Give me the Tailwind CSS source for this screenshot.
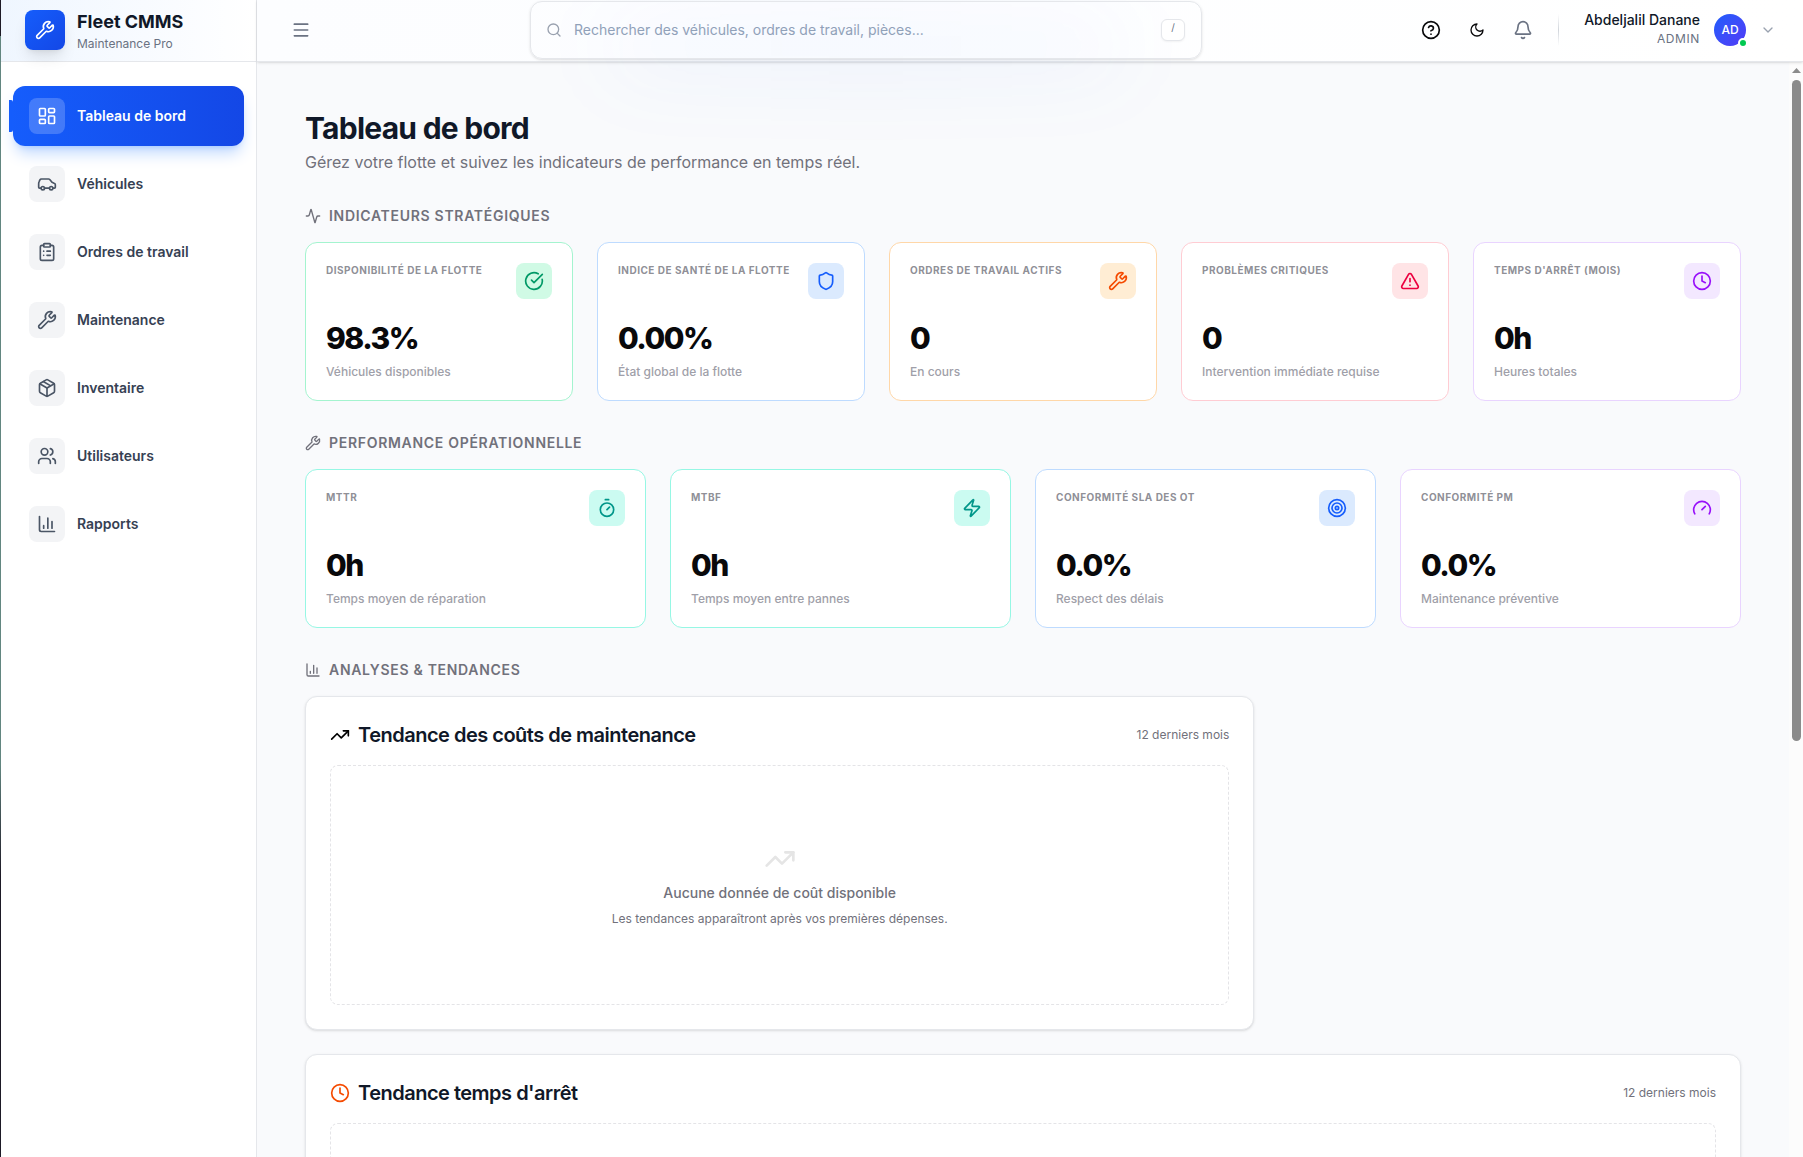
<!DOCTYPE html>
<html lang="fr">

<head>
    <meta charset="UTF-8">
    <meta name="viewport" content="width=device-width, initial-scale=1.0">
    <title>Fleet CMMS - Tableau de bord</title>
    <script src="https://cdn.jsdelivr.net/npm/@tailwindcss/browser@4"></script>
</head>

<body class="flex h-screen overflow-hidden bg-white font-['Inter',sans-serif] text-zinc-950">

    <!-- icon sprite -->
    <svg class="hidden" xmlns="http://www.w3.org/2000/svg">
        <symbol id="wrench" viewBox="0 0 24 24"><path d="M14.7 6.3a1 1 0 0 0 0 1.4l1.6 1.6a1 1 0 0 0 1.4 0l3.106-3.105c.32-.322.863-.22.983.218a6 6 0 0 1-8.259 7.057l-7.91 7.91a1 1 0 0 1-2.999-3l7.91-7.91a6 6 0 0 1 7.057-8.259c.438.12.54.662.219.984z"/></symbol>
        <symbol id="dashboard" viewBox="0 0 24 24"><rect width="7" height="9" x="3" y="3" rx="1"/><rect width="7" height="5" x="14" y="3" rx="1"/><rect width="7" height="9" x="14" y="12" rx="1"/><rect width="7" height="5" x="3" y="16" rx="1"/></symbol>
        <symbol id="car" viewBox="0 0 24 24"><path d="M19 17h2c.6 0 1-.4 1-1v-3c0-.9-.7-1.7-1.5-1.9L18 10l-2.7-3.4A2 2 0 0 0 13.700 6H5.300a2 2 0 0 0-1.800 1.100l-.8 1.700A6 6 0 0 0 2 12v4c0 .6.4 1 1 1h2"/><circle cx="7" cy="17" r="2"/><path d="M9 17h6"/><circle cx="17" cy="17" r="2"/></symbol>
        <symbol id="clipboard" viewBox="0 0 24 24"><rect width="8" height="4" x="8" y="2" rx="1" ry="1"/><path d="M16 4h2a2 2 0 0 1 2 2v14a2 2 0 0 1-2 2H6a2 2 0 0 1-2-2V6a2 2 0 0 1 2-2h2M12 11h4M12 16h4M8 11h.01M8 16h.01"/></symbol>
        <symbol id="package" viewBox="0 0 24 24"><path d="M11 21.730a2 2 0 0 0 2 0l7-4A2 2 0 0 0 21 16V8a2 2 0 0 0-1-1.730l-7-4a2 2 0 0 0-2 0l-7 4A2 2 0 0 0 3 8v8a2 2 0 0 0 1 1.730zM12 22V12"/><path d="M3.290 7 12 12l8.710-5M7.500 4.270l9 5.150"/></symbol>
        <symbol id="users" viewBox="0 0 24 24"><path d="M16 21v-2a4 4 0 0 0-4-4H6a4 4 0 0 0-4 4v2M16 3.128a4 4 0 0 1 0 7.744M22 21v-2a4 4 0 0 0-3-3.870"/><circle cx="9" cy="7" r="4"/></symbol>
        <symbol id="chart" viewBox="0 0 24 24"><path d="M3 3v16a2 2 0 0 0 2 2h16M18 17V9M13 17V5M8 17v-3"/></symbol>
        <symbol id="menu" viewBox="0 0 24 24"><path d="M4 5h16M4 12h16M4 19h16"/></symbol>
        <symbol id="search" viewBox="0 0 24 24"><path d="m21 21-4.340-4.340"/><circle cx="11" cy="11" r="8"/></symbol>
        <symbol id="help" viewBox="0 0 24 24"><circle cx="12" cy="12" r="10"/><path d="M9.090 9a3 3 0 0 1 5.830 1c0 2-3 3-3 3M12 17h.01"/></symbol>
        <symbol id="moon" viewBox="0 0 24 24"><path d="M12 3a6 6 0 0 0 9 9 9 9 0 1 1-9-9"/></symbol>
        <symbol id="bell" viewBox="0 0 24 24"><path d="M10.268 21a2 2 0 0 0 3.464 0M3.262 15.326A1 1 0 0 0 4 17h16a1 1 0 0 0 .740-1.673C19.410 13.956 18 12.499 18 8A6 6 0 0 0 6 8c0 4.499-1.411 5.956-2.738 7.326"/></symbol>
        <symbol id="chevron" viewBox="0 0 24 24"><path d="m6 9 6 6 6-6"/></symbol>
        <symbol id="activity" viewBox="0 0 24 24"><path d="M22 12h-2.480a2 2 0 0 0-1.930 1.460l-2.350 8.360a.25.25 0 0 1-.48 0L9.240 2.180a.25.25 0 0 0-.48 0l-2.350 8.360A2 2 0 0 1 4.490 12H2"/></symbol>
        <symbol id="check" viewBox="0 0 24 24"><path d="M21.801 10A10 10 0 1 1 17 3.335"/><path d="m9 11 3 3L22 4"/></symbol>
        <symbol id="shield" viewBox="0 0 24 24"><path d="M20 13c0 5-3.500 7.500-7.660 8.950a1 1 0 0 1-.67-.01C7.500 20.500 4 18 4 13V6a1 1 0 0 1 1-1c2 0 4.500-1.200 6.240-2.720a1.170 1.170 0 0 1 1.520 0C14.510 3.810 17 5 19 5a1 1 0 0 1 1 1z"/></symbol>
        <symbol id="alert" viewBox="0 0 24 24"><path d="m21.730 18-8-14a2 2 0 0 0-3.480 0l-8 14A2 2 0 0 0 4 21h16a2 2 0 0 0 1.730-3M12 9v4M12 17h.01"/></symbol>
        <symbol id="clock" viewBox="0 0 24 24"><circle cx="12" cy="12" r="10"/><path d="M12 6v6l4 2"/></symbol>
        <symbol id="timer" viewBox="0 0 24 24"><path d="M10 2h4M12 14l3-3"/><circle cx="12" cy="14" r="8"/></symbol>
        <symbol id="zap" viewBox="0 0 24 24"><path d="M4 14a1 1 0 0 1-.78-1.630l9.900-10.200a.5.5 0 0 1 .86.46l-1.920 6.020A1 1 0 0 0 13 10h7a1 1 0 0 1 .78 1.630l-9.900 10.200a.5.5 0 0 1-.86-.46l1.920-6.020A1 1 0 0 0 11 14z"/></symbol>
        <symbol id="target" viewBox="0 0 24 24"><circle cx="12" cy="12" r="10"/><circle cx="12" cy="12" r="6"/><circle cx="12" cy="12" r="2"/></symbol>
        <symbol id="gauge" viewBox="0 0 24 24"><path d="m12 14 4-4M3.340 19a10 10 0 1 1 17.320 0"/></symbol>
        <symbol id="trend" viewBox="0 0 24 24"><path d="M16 7h6v6"/><path d="m22 7-8.500 8.500-5-5L2 17"/></symbol>
    </svg>

    <div class="flex w-px shrink-0 flex-col">
        <div class="h-9 bg-[#1d1a26]"></div>
        <div class="flex-1 bg-linear-to-b from-[#628680] from-65% to-[#1d1a26] to-75%"></div>
    </div>

    <!-- sidebar -->
    <aside class="flex w-64 shrink-0 flex-col border-r border-gray-200 bg-white">
        <div class="flex h-[62px] shrink-0 items-center gap-3 border-b border-gray-200 bg-linear-to-r from-blue-50 to-white px-6 pb-px">
            <div class="flex size-10 items-center justify-center rounded-lg bg-linear-to-br from-blue-600 to-blue-700 text-white shadow-lg">
                <svg class="size-5 fill-none stroke-current stroke-2" stroke-linecap="round" stroke-linejoin="round"><use href="#wrench"/></svg>
            </div>
            <div>
                <p class="text-lg font-bold text-gray-900">Fleet CMMS</p>
                <p class="text-xs text-gray-500">Maintenance Pro</p>
            </div>
        </div>
        <nav class="flex flex-col gap-2 px-3 py-6 text-sm font-semibold text-gray-700">
            <a href="#" class="relative flex items-center gap-3 rounded-xl bg-linear-to-r from-blue-600 to-blue-700 px-4 py-3 text-white shadow-lg shadow-blue-500/30">
                <span class="absolute -left-1 h-8 w-1 rounded-r-xs bg-blue-600"></span>
                <span class="flex size-9 items-center justify-center rounded-lg bg-white/20"><svg class="size-5 fill-none stroke-current stroke-2" stroke-linecap="round" stroke-linejoin="round"><use href="#dashboard"/></svg></span>
                Tableau de bord
            </a>
            <a href="#" class="flex items-center gap-3 rounded-xl px-4 py-3">
                <span class="flex size-9 items-center justify-center rounded-lg bg-gray-100 text-gray-600"><svg class="size-5 fill-none stroke-current stroke-2" stroke-linecap="round" stroke-linejoin="round"><use href="#car"/></svg></span>
                Véhicules
            </a>
            <a href="#" class="flex items-center gap-3 rounded-xl px-4 py-3">
                <span class="flex size-9 items-center justify-center rounded-lg bg-gray-100 text-gray-600"><svg class="size-5 fill-none stroke-current stroke-2" stroke-linecap="round" stroke-linejoin="round"><use href="#clipboard"/></svg></span>
                Ordres de travail
            </a>
            <a href="#" class="flex items-center gap-3 rounded-xl px-4 py-3">
                <span class="flex size-9 items-center justify-center rounded-lg bg-gray-100 text-gray-600"><svg class="size-5 fill-none stroke-current stroke-2" stroke-linecap="round" stroke-linejoin="round"><use href="#wrench"/></svg></span>
                Maintenance
            </a>
            <a href="#" class="flex items-center gap-3 rounded-xl px-4 py-3">
                <span class="flex size-9 items-center justify-center rounded-lg bg-gray-100 text-gray-600"><svg class="size-5 fill-none stroke-current stroke-2" stroke-linecap="round" stroke-linejoin="round"><use href="#package"/></svg></span>
                Inventaire
            </a>
            <a href="#" class="flex items-center gap-3 rounded-xl px-4 py-3">
                <span class="flex size-9 items-center justify-center rounded-lg bg-gray-100 text-gray-600"><svg class="size-5 fill-none stroke-current stroke-2" stroke-linecap="round" stroke-linejoin="round"><use href="#users"/></svg></span>
                Utilisateurs
            </a>
            <a href="#" class="flex items-center gap-3 rounded-xl px-4 py-3">
                <span class="flex size-9 items-center justify-center rounded-lg bg-gray-100 text-gray-600"><svg class="size-5 fill-none stroke-current stroke-2" stroke-linecap="round" stroke-linejoin="round"><use href="#chart"/></svg></span>
                Rapports
            </a>
        </nav>
    </aside>

    <div class="flex min-w-0 flex-1 flex-col">

        <!-- top bar -->
        <header class="relative z-10 flex h-[62px] shrink-0 items-center border-b border-gray-200 bg-linear-to-r from-[#fcfdff] to-white pr-[15px] pb-px pl-6 shadow-sm">
            <button type="button" aria-label="Menu" class="flex size-10 items-center justify-center rounded-lg text-gray-500">
                <svg class="size-5 fill-none stroke-current stroke-2" stroke-linecap="round" stroke-linejoin="round"><use href="#menu"/></svg>
            </button>
            <div class="flex flex-1 justify-center">
                <div class="relative w-full max-w-2xl">
                    <div class="pointer-events-none absolute inset-x-20 top-6 -bottom-2 rounded-full bg-linear-to-r from-blue-500/6 via-blue-600/8 to-blue-500/6 blur-2xl"></div>
                    <div class="relative flex h-[58px] items-center gap-3 rounded-xl border border-gray-200 bg-white/20 pr-4 pl-[15px] shadow-sm">
                        <svg class="size-4 shrink-0 fill-none stroke-gray-400 stroke-2" stroke-linecap="round" stroke-linejoin="round"><use href="#search"/></svg>
                        <input type="text" aria-label="Rechercher" placeholder="Rechercher des véhicules, ordres de travail, pièces..." class="min-w-0 flex-1 bg-transparent text-sm outline-none placeholder:text-slate-400">
                        <kbd class="flex h-[22px] w-6 justify-center rounded-md border border-gray-200 bg-white font-['Inter',sans-serif] text-[10px] leading-[15px] text-gray-500 shadow-xs">/</kbd>
                    </div>
                </div>
            </div>
            <div class="flex items-center gap-1.5">
                <button type="button" aria-label="Aide" class="flex size-10 items-center justify-center rounded-lg">
                    <svg class="size-5 fill-none stroke-current stroke-2" stroke-linecap="round" stroke-linejoin="round"><use href="#help"/></svg>
                </button>
                <button type="button" aria-label="Mode sombre" class="flex size-10 items-center justify-center rounded-lg">
                    <svg class="size-4 fill-none stroke-current stroke-2" stroke-linecap="round" stroke-linejoin="round"><use href="#moon"/></svg>
                </button>
                <button type="button" aria-label="Notifications" class="flex size-10 items-center justify-center rounded-lg text-gray-500">
                    <svg class="size-5 fill-none stroke-current stroke-2" stroke-linecap="round" stroke-linejoin="round"><use href="#bell"/></svg>
                </button>
                <div class="mr-[7px] ml-[9px] h-8 w-px bg-linear-to-b from-transparent via-gray-300 to-transparent"></div>
                <button type="button" class="flex items-center gap-3.5 px-3">
                    <span class="pb-0.5 text-right">
                        <span class="block text-sm font-medium text-gray-900">Abdeljalil Danane</span>
                        <span class="block text-xs leading-[18px] tracking-wider text-gray-500">ADMIN</span>
                    </span>
                    <span class="relative flex size-8 items-center justify-center rounded-full bg-linear-to-br from-blue-600 to-indigo-600 text-xs font-medium text-white shadow-sm ring-2 ring-white">
                        AD
                        <span class="absolute -right-0.5 -bottom-0.5 size-2.5 rounded-full border-2 border-white bg-green-500"></span>
                    </span>
                    <svg class="size-4 fill-none stroke-gray-400 stroke-2" stroke-linecap="round" stroke-linejoin="round"><use href="#chevron"/></svg>
                </button>
            </div>
        </header>

        <div class="flex min-h-0 flex-1">
            <main class="min-w-0 flex-1 overflow-hidden bg-[#f9fafc] p-12">
                <h1 class="text-3xl font-bold tracking-tight text-gray-900">Tableau de bord</h1>
                <p class="mt-1 text-zinc-500">Gérez votre flotte et suivez les indicateurs de performance en temps réel.</p>

                <section class="mt-8">
                    <h2 class="mb-4 flex items-center gap-2 text-sm font-semibold tracking-wider text-zinc-500 uppercase">
                        <svg class="size-4 fill-none stroke-current stroke-2" stroke-linecap="round" stroke-linejoin="round"><use href="#activity"/></svg>
                        Indicateurs stratégiques
                    </h2>
                    <div class="grid grid-cols-5 gap-6">
                        <div class="rounded-xl border border-emerald-200 bg-white p-5">
                            <div class="mb-[21px] flex items-start justify-between">
                                <h3 class="text-[10px] leading-[15px] font-bold tracking-wider text-zinc-500/80 uppercase">Disponibilité de la flotte</h3>
                                <span class="flex size-9 items-center justify-center rounded-lg bg-emerald-100 text-emerald-600"><svg class="size-5 fill-none stroke-current stroke-2" stroke-linecap="round" stroke-linejoin="round"><use href="#check"/></svg></span>
                            </div>
                            <p class="text-3xl font-extrabold tracking-tighter">98.3%</p>
                            <p class="mt-2 text-xs font-medium text-zinc-400">Véhicules disponibles</p>
                        </div>
                        <div class="rounded-xl border border-blue-200 bg-white p-5">
                            <div class="mb-[21px] flex items-start justify-between">
                                <h3 class="text-[10px] leading-[15px] font-bold tracking-wider text-zinc-500/80 uppercase">Indice de santé de la flotte</h3>
                                <span class="flex size-9 items-center justify-center rounded-lg bg-blue-100 text-blue-600"><svg class="size-5 fill-none stroke-current stroke-2" stroke-linecap="round" stroke-linejoin="round"><use href="#shield"/></svg></span>
                            </div>
                            <p class="text-3xl font-extrabold tracking-tighter">0.00%</p>
                            <p class="mt-2 text-xs font-medium text-zinc-400">État global de la flotte</p>
                        </div>
                        <div class="rounded-xl border border-orange-200 bg-white p-5">
                            <div class="mb-[21px] flex items-start justify-between">
                                <h3 class="text-[10px] leading-[15px] font-bold tracking-wider text-zinc-500/80 uppercase">Ordres de travail actifs</h3>
                                <span class="flex size-9 items-center justify-center rounded-lg bg-orange-100 text-orange-600"><svg class="size-5 fill-none stroke-current stroke-2" stroke-linecap="round" stroke-linejoin="round"><use href="#wrench"/></svg></span>
                            </div>
                            <p class="text-3xl font-extrabold tracking-tighter">0</p>
                            <p class="mt-2 text-xs font-medium text-zinc-400">En cours</p>
                        </div>
                        <div class="rounded-xl border border-rose-200 bg-white p-5">
                            <div class="mb-[21px] flex items-start justify-between">
                                <h3 class="text-[10px] leading-[15px] font-bold tracking-wider text-zinc-500/80 uppercase">Problèmes critiques</h3>
                                <span class="flex size-9 items-center justify-center rounded-lg bg-rose-100 text-rose-600"><svg class="size-5 fill-none stroke-current stroke-2" stroke-linecap="round" stroke-linejoin="round"><use href="#alert"/></svg></span>
                            </div>
                            <p class="text-3xl font-extrabold tracking-tighter">0</p>
                            <p class="mt-2 text-xs font-medium text-zinc-400">Intervention immédiate requise</p>
                        </div>
                        <div class="rounded-xl border border-purple-200 bg-white p-5">
                            <div class="mb-[21px] flex items-start justify-between">
                                <h3 class="text-[10px] leading-[15px] font-bold tracking-wider text-zinc-500/80 uppercase">Temps d'arrêt (mois)</h3>
                                <span class="flex size-9 items-center justify-center rounded-lg bg-purple-100 text-purple-600"><svg class="size-5 fill-none stroke-current stroke-2" stroke-linecap="round" stroke-linejoin="round"><use href="#clock"/></svg></span>
                            </div>
                            <p class="text-3xl font-extrabold tracking-tighter">0h</p>
                            <p class="mt-2 text-xs font-medium text-zinc-400">Heures totales</p>
                        </div>
                    </div>
                </section>

                <section class="mt-8">
                    <h2 class="mb-4 flex items-center gap-2 text-sm font-semibold tracking-wider text-zinc-500 uppercase">
                        <svg class="size-4 fill-none stroke-current stroke-2" stroke-linecap="round" stroke-linejoin="round"><use href="#wrench"/></svg>
                        Performance opérationnelle
                    </h2>
                    <div class="grid grid-cols-4 gap-6">
                        <div class="rounded-xl border border-teal-200 bg-white p-5">
                            <div class="mb-[21px] flex items-start justify-between">
                                <h3 class="text-[10px] leading-[15px] font-bold tracking-wider text-zinc-500/80 uppercase">MTTR</h3>
                                <span class="flex size-9 items-center justify-center rounded-lg bg-teal-100 text-teal-600"><svg class="size-5 fill-none stroke-current stroke-2" stroke-linecap="round" stroke-linejoin="round"><use href="#timer"/></svg></span>
                            </div>
                            <p class="text-3xl font-extrabold tracking-tighter">0h</p>
                            <p class="mt-2 text-xs font-medium text-zinc-400">Temps moyen de réparation</p>
                        </div>
                        <div class="rounded-xl border border-teal-200 bg-white p-5">
                            <div class="mb-[21px] flex items-start justify-between">
                                <h3 class="text-[10px] leading-[15px] font-bold tracking-wider text-zinc-500/80 uppercase">MTBF</h3>
                                <span class="flex size-9 items-center justify-center rounded-lg bg-teal-100 text-teal-600"><svg class="size-5 fill-none stroke-current stroke-2" stroke-linecap="round" stroke-linejoin="round"><use href="#zap"/></svg></span>
                            </div>
                            <p class="text-3xl font-extrabold tracking-tighter">0h</p>
                            <p class="mt-2 text-xs font-medium text-zinc-400">Temps moyen entre pannes</p>
                        </div>
                        <div class="rounded-xl border border-blue-200 bg-white p-5">
                            <div class="mb-[21px] flex items-start justify-between">
                                <h3 class="text-[10px] leading-[15px] font-bold tracking-wider text-zinc-500/80 uppercase">Conformité SLA des OT</h3>
                                <span class="flex size-9 items-center justify-center rounded-lg bg-blue-100 text-blue-600"><svg class="size-5 fill-none stroke-current stroke-2" stroke-linecap="round" stroke-linejoin="round"><use href="#target"/></svg></span>
                            </div>
                            <p class="text-3xl font-extrabold tracking-tighter">0.0%</p>
                            <p class="mt-2 text-xs font-medium text-zinc-400">Respect des délais</p>
                        </div>
                        <div class="rounded-xl border border-purple-200 bg-white p-5">
                            <div class="mb-[21px] flex items-start justify-between">
                                <h3 class="text-[10px] leading-[15px] font-bold tracking-wider text-zinc-500/80 uppercase">Conformité PM</h3>
                                <span class="flex size-9 items-center justify-center rounded-lg bg-purple-100 text-purple-600"><svg class="size-5 fill-none stroke-current stroke-2" stroke-linecap="round" stroke-linejoin="round"><use href="#gauge"/></svg></span>
                            </div>
                            <p class="text-3xl font-extrabold tracking-tighter">0.0%</p>
                            <p class="mt-2 text-xs font-medium text-zinc-400">Maintenance préventive</p>
                        </div>
                    </div>
                </section>

                <section class="mt-8">
                    <h2 class="mb-4 flex items-center gap-2 text-sm font-semibold tracking-wider text-zinc-500 uppercase">
                        <svg class="size-4 fill-none stroke-current stroke-2" stroke-linecap="round" stroke-linejoin="round"><use href="#chart"/></svg>
                        Analyses &amp; tendances
                    </h2>
                    <div class="grid grid-cols-3 gap-6">
                        <div class="col-span-2 rounded-xl border border-gray-200 bg-white p-6 shadow-sm">
                            <div class="mb-4 flex items-center justify-between">
                                <h3 class="flex items-center gap-2 text-xl leading-7 font-semibold tracking-tight text-gray-900">
                                    <svg class="size-5 fill-none stroke-black stroke-2" stroke-linecap="round" stroke-linejoin="round"><use href="#trend"/></svg>
                                    Tendance des coûts de maintenance
                                </h3>
                                <span class="text-xs text-zinc-500">12 derniers mois</span>
                            </div>
                            <div class="flex h-60 flex-col items-center justify-center gap-2 rounded-lg border border-dashed border-zinc-200">
                                <svg class="size-8 fill-none stroke-neutral-200 stroke-2" stroke-linecap="round" stroke-linejoin="round"><use href="#trend"/></svg>
                                <p class="text-sm font-medium text-zinc-500">Aucune donnée de coût disponible</p>
                                <p class="text-xs text-zinc-500">Les tendances apparaîtront après vos premières dépenses.</p>
                            </div>
                        </div>
                        <div class="col-span-3 rounded-xl border border-gray-200 bg-white p-6 shadow-sm">
                            <div class="mb-4 flex items-center justify-between">
                                <h3 class="flex items-center gap-2 text-xl leading-7 font-semibold tracking-tight text-gray-900">
                                    <svg class="size-5 fill-none stroke-orange-600 stroke-2" stroke-linecap="round" stroke-linejoin="round"><use href="#clock"/></svg>
                                    Tendance temps d'arrêt
                                </h3>
                                <span class="text-xs text-zinc-500">12 derniers mois</span>
                            </div>
                            <div class="h-60 rounded-lg border border-dashed border-zinc-200"></div>
                        </div>
                    </div>
                </section>
            </main>

            <!-- scroll track -->
            <div class="flex w-3.5 shrink-0 flex-col items-center bg-[#fcfcfc] pt-1.5">
                <svg class="h-[5px] w-[9px] fill-[#8b8b8b]" viewBox="0 0 9 5"><path d="M0 5 4.500 0 9 5z"/></svg>
                <div class="mt-[7px] h-[60.7%] w-[9px] rounded-full bg-[#8b8b8b]"></div>
            </div>
        </div>
    </div>
</body>

</html>
